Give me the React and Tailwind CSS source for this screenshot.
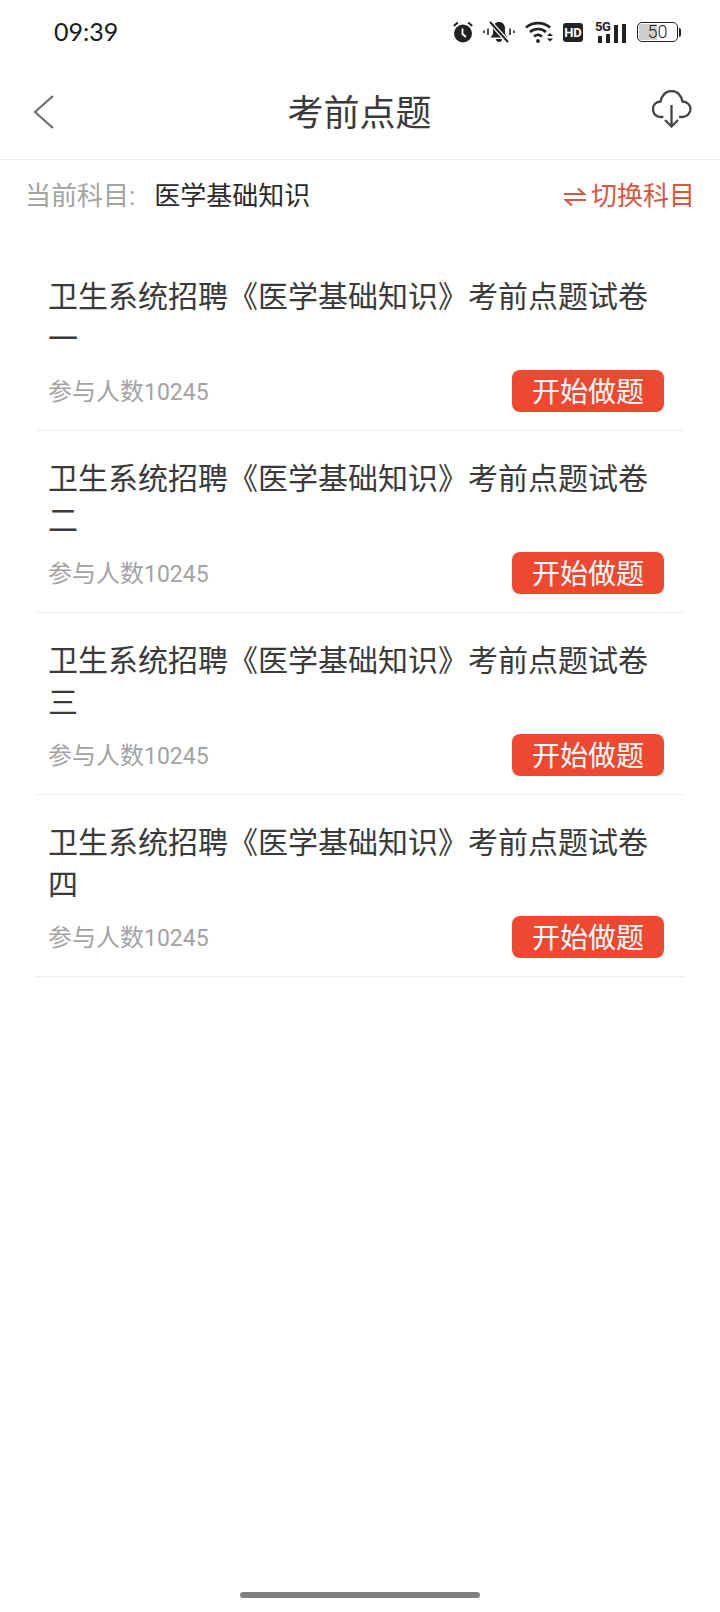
import React from "react";

const cjk = { fontFamily: '"Roboto", "Noto Sans CJK SC", sans-serif' };

const papers = ["一", "二", "三", "四"];

function StatusIcons() {
  return (
    <div className="flex items-center text-[#222]">
      {/* alarm */}
      <svg width="20" height="22" viewBox="0 0 20 22">
        <circle cx="10" cy="12.5" r="9" fill="#222" />
        <path d="M9.500 7.500v5.500l3.500 3" stroke="#fff" strokeWidth="1.800" fill="none" />
        <path d="M.8 5 4.800 1.500M19.200 5 15.200 1.500" stroke="#222" strokeWidth="2" fill="none" />
      </svg>
      {/* muted bell */}
      <svg width="32" height="22" viewBox="0 0 32 22" className="ml-[10px]">
        <path d="M16 1c-3.500 0-6 2.500-6 6.500V13l-2.500 3.500h17L22 13V7.500C22 3.500 19.500 1 16 1z" fill="#222" />
        <path d="M13 18h6a3 3 0 0 1-6 0z" fill="#222" />
        <path d="M7 1 25 21" stroke="#fff" strokeWidth="4.500" />
        <path d="M7 1 25 21" stroke="#222" strokeWidth="2" />
        <path d="M1 9.500v2.500M5 7.500v6.500M31 9.500v2.500M27 7.500v6.500" stroke="#222" strokeWidth="1.600" />
      </svg>
      {/* wifi */}
      <svg width="28" height="22" viewBox="0 0 28 22" className="ml-[10px]">
        <path d="M1 6.500C7.500 .6 18.500 .6 25 6.500" stroke="#222" strokeWidth="2.600" fill="none" />
        <path d="M5 11C9.500 7 16.500 7 21 11" stroke="#222" strokeWidth="2.600" fill="none" />
        <path d="M9 15.500c2.500-2 5.500-2 8 0" stroke="#222" strokeWidth="2.600" fill="none" />
        <circle cx="13" cy="20" r="1.900" fill="#222" />
        <path d="M22 15h6l-3-3zM22 17.500h6l-3 3z" fill="#222" />
      </svg>
      {/* HD */}
      <div className="ml-[10px] flex h-[19px] w-[20px] items-center justify-center rounded-[3px] bg-[#222] text-[13px] leading-none font-bold text-white" style={{ fontFamily: '"Roboto", sans-serif' }}>
        HD
      </div>
      {/* 5G + signal */}
      <div className="relative ml-[12px] flex h-[22px] w-[31px] items-end gap-[4px] pl-[3px]">
        <span className="absolute -top-[1px] left-0 text-[13px] leading-none font-bold tracking-[-0.5px]" style={{ fontFamily: '"Roboto", sans-serif' }}>5G</span>
        <div className="h-[7px] w-[4px] bg-[#222]" />
        <div className="h-[9px] w-[4px] bg-[#222]" />
        <div className="h-[18px] w-[4px] bg-[#222]" />
        <div className="h-[19px] w-[4px] bg-[#222]" />
      </div>
      {/* battery */}
      <div className="ml-[11px] flex items-center">
        <div className="relative h-[20px] w-[41px] overflow-hidden rounded-[5px] border-[1.5px] border-[#222] p-[1px]">
          <div className="h-full w-[18px] bg-[#cfcfcf]" />
          <span className="absolute inset-0 text-center text-[18px] leading-[17px] font-light text-[#222]" style={{ fontFamily: '"Roboto", sans-serif' }}>50</span>
        </div>
        <div className="ml-[1px] h-[9px] w-[2px] rounded-r-sm bg-[#222]" />
      </div>
    </div>
  );
}

function PaperRow({ suffix }) {
  return (
    <div className="border-b border-[#efefef] pt-[26px] pr-[20px] pb-[18px] pl-[12px]">
      <p className="pt-[1px] text-[30px] leading-[42px] text-[#3a3a3a]">
        卫生系统招聘《医学基础知识》考前点题试卷{suffix}
      </p>
      <div className="mt-[10px] flex h-[42px] items-center justify-between">
        <span className="pt-[2px] text-[24px] text-[#a3a3a3]">
          参与人数<span className="text-[23px]">10245</span>
        </span>
        <button className="flex h-[42px] w-[152px] items-center justify-center rounded-[8px] bg-[#ef4831] pt-[3px] text-[28px] text-white">
          开始做题
        </button>
      </div>
    </div>
  );
}

export default function App() {
  return (
    <div className="relative flex h-[1612px] w-[720px] flex-col overflow-hidden bg-white" style={cjk}>
      {/* status bar */}
      <div className="flex h-[64px] items-center justify-between pr-[39px] pl-[54px]">
        <span className="text-[25px] text-[#1c1c1c]" style={{ fontFamily: '"Lato", sans-serif' }}>09:39</span>
        <StatusIcons />
      </div>

      {/* header */}
      <div className="flex h-[96px] items-center border-b border-[#ececec] pr-[28px] pl-[32px]">
        <div className="flex flex-1 items-center">
          <svg width="24" height="36" viewBox="0 0 24 36">
            <path d="M21 2 3 18l18 16" stroke="#6f6f6f" strokeWidth="2.200" fill="none" />
          </svg>
        </div>
        <h1 className="mr-[5px] pt-[5px] text-[36px] text-[#3a3a3a]">考前点题</h1>
        <div className="flex flex-1 items-center justify-end">
          <svg width="40" height="38" viewBox="0 0 40 38" className="-mt-[6px]">
            <path d="M10.500 27H8C3.500 27 1 23 1 19S4 11.500 8.500 11.500C10 5 14 1 19.500 1S29 5 30.500 11.500C35 11.500 38.500 15 38.500 19S35 27 30.500 27H28" stroke="#444444" strokeWidth="2.300" fill="none" strokeLinecap="round" />
            <path d="M19.500 15v21M13 30l6.500 6.500L26 30" stroke="#444444" strokeWidth="2.300" fill="none" />
          </svg>
        </div>
      </div>

      {/* current subject */}
      <div className="flex h-[72px] items-center justify-between pt-[1px] pr-[25px] pl-[25px]">
        <div className="flex items-center text-[26px]">
          <span className="text-[#a3a3a3]">当前科目:</span>
          <span className="ml-[19px] text-[#2a2a2a]">医学基础知识</span>
        </div>
        <div className="flex items-center text-[26px] text-[#d8553f]">
          <svg width="22" height="20" viewBox="0 0 22 20" className="mr-[5px]">
            <path d="M0 7h20L14 1.500M22 13H2l6 5.500" stroke="#d8553f" strokeWidth="2.200" fill="none" />
          </svg>
          切换科目
        </div>
      </div>

      {/* paper list */}
      <div className="mt-[17px] pr-[36px] pl-[36px]">
        {papers.map((p) => (
          <PaperRow key={p} suffix={p} />
        ))}
      </div>

      {/* gesture bar */}
      <div className="absolute bottom-[14px] left-[240px] h-[6px] w-[240px] rounded-full bg-[#808080]" />
    </div>
  );
}
